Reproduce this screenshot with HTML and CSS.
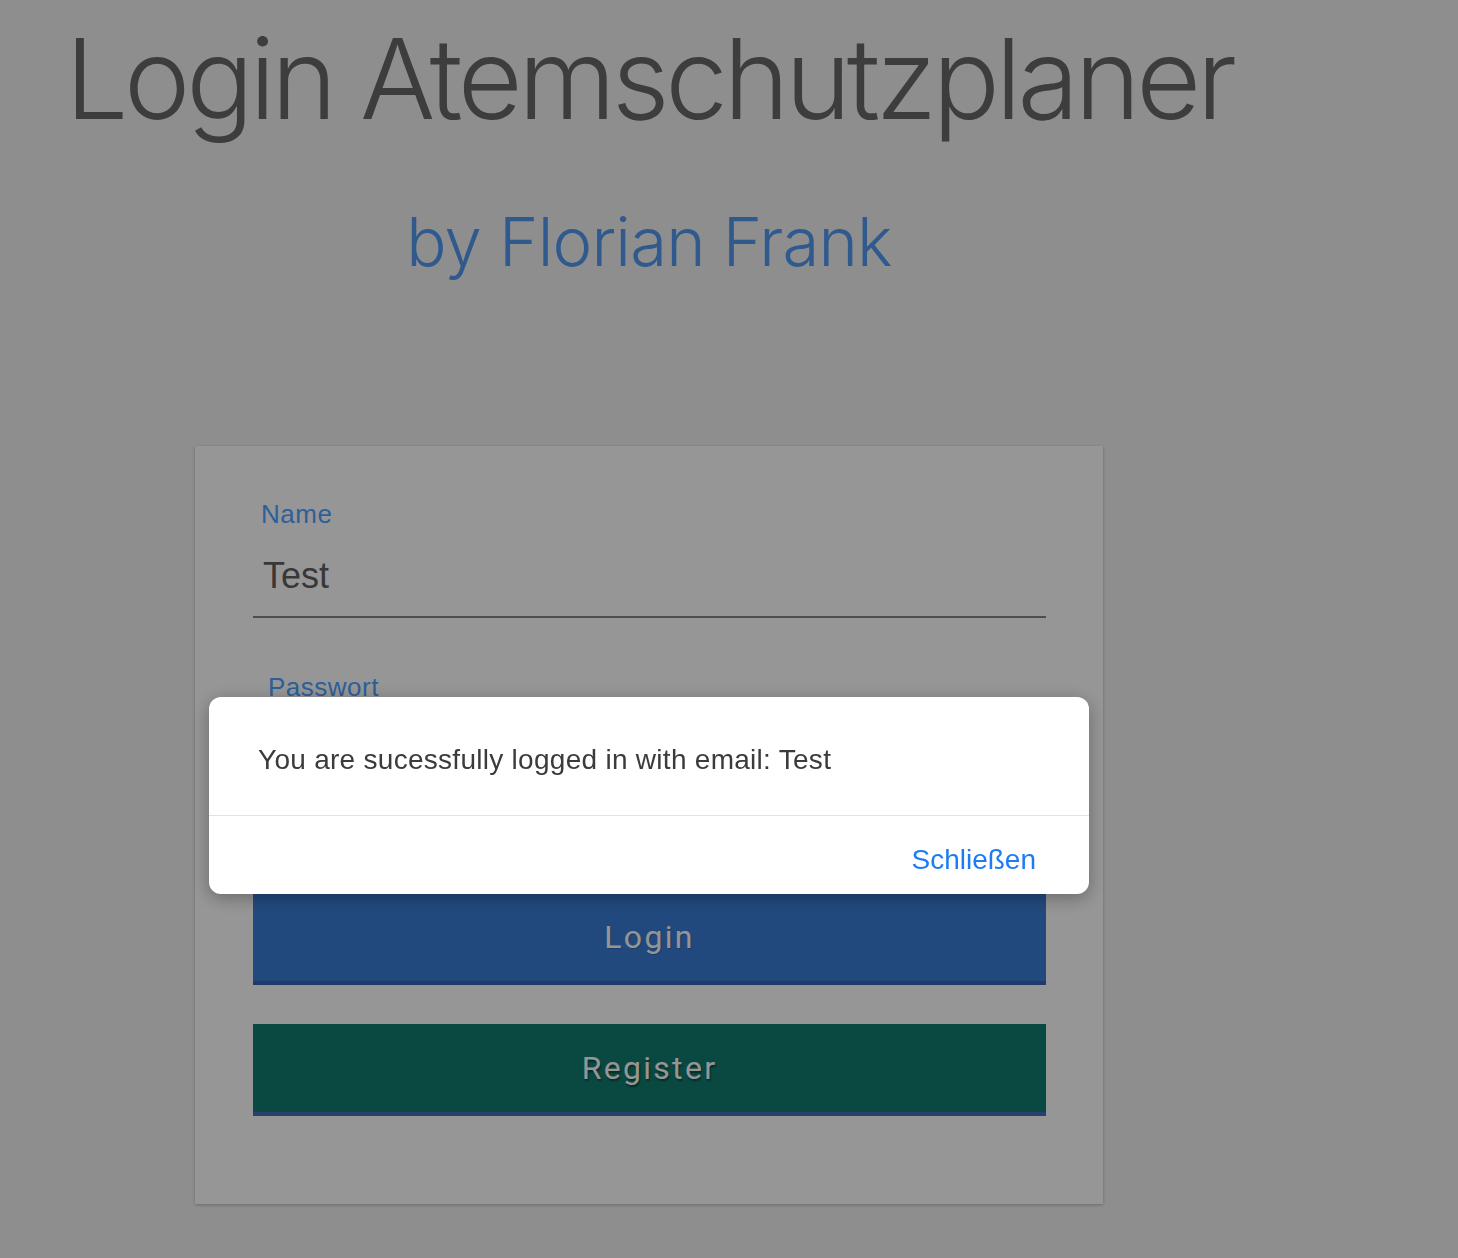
FILE: index.html
```html
<!DOCTYPE html>
<html lang="de">
<head>
<meta charset="utf-8">
<title>Login Atemschutzplaner</title>
<link rel="stylesheet" href="styles.css">
</head>
<body>
<div class="page">
  <h1 class="title">Login Atemschutzplaner</h1>
  <h2 class="subtitle">by Florian Frank</h2>
  <div class="card">
    <div class="field">
      <label class="label">Name</label>
      <div class="input">Test</div>
    </div>
    <div class="field">
      <label class="label label-pw">Passwort</label>
      <div class="input">&nbsp;</div>
    </div>
    <button class="btn btn-login">Login</button>
    <button class="btn btn-register">Register</button>
  </div>
</div>
<div class="backdrop"></div>
<div class="dialog">
  <div class="dialog-body">You are sucessfully logged in with email: Test</div>
  <div class="dialog-actions"><span class="dialog-close">Schließen</span></div>
</div>
</body>
</html>
```
FILE: styles.css
```css
html, body {
  margin: 0;
  padding: 0;
}
body {
  background: #ededed;
  font-family: "Liberation Sans", Arial, sans-serif;
  width: 1458px;
  height: 1258px;
  overflow: hidden;
}
.page {
  width: 1298px;
  display: flex;
  flex-direction: column;
  align-items: center;
}
.title {
  margin: 22px 0 0 0;
  font-family: Inter, "Liberation Sans", sans-serif;
  font-weight: 300;
  font-size: 112px;
  line-height: 112px;
  letter-spacing: -4.3px;
  color: #666666;
  white-space: nowrap;
}
.subtitle {
  margin: 74px 0 0 0;
  font-family: Inter, "Liberation Sans", sans-serif;
  font-weight: 300;
  font-size: 67px;
  line-height: 67px;
  letter-spacing: -0.8px;
  color: #5096ed;
  white-space: nowrap;
}
.card {
  margin-top: 171px;
  width: 908px;
  height: 758px;
  box-sizing: border-box;
  background: #fafafa;
  box-shadow: 0 1px 3px rgba(0,0,0,0.25);
  padding: 53px 57px 0 58px;
  display: flex;
  flex-direction: column;
}
.field {
  display: flex;
  flex-direction: column;
}
.field + .field {
  margin-top: 54px;
}
.label {
  font-size: 26px;
  line-height: 30px;
  letter-spacing: 0.5px;
  color: #4d9eff;
  padding-left: 8px;
}
.label-pw {
  padding-left: 15px;
}
.input {
  margin-top: 27px;
  font-size: 36px;
  line-height: 40px;
  color: #5e5e5e;
  padding: 0 0 20px 10px;
  border-bottom: 2px solid #808080;
}
.btn {
  display: block;
  width: 100%;
  height: 92px;
  border: 0;
  border-bottom: 4px solid;
  margin: 0;
  padding: 0;
  font-family: Roboto, "Liberation Sans", sans-serif;
  font-size: 32px;
  letter-spacing: 2.3px;
  color: #f8f8f8;
}
.btn-login {
  margin-top: 102px;
  background: #397bd2;
  border-bottom-color: #3462b2;
  text-shadow: 1px 1px 1px rgba(0,0,0,0.2);
}
.btn-register {
  margin-top: 39px;
  background: #117b6e;
  border-bottom-color: #416bb9;
  text-shadow: 1px 2px 2px rgba(0,0,0,0.45);
}
.backdrop {
  position: fixed;
  inset: 0;
  background: rgba(0,0,0,0.4);
}
.dialog {
  position: fixed;
  left: 209px;
  top: 697px;
  width: 880px;
  background: #ffffff;
  border-radius: 12px;
  box-shadow: 0 4px 18px rgba(0,0,0,0.3);
  overflow: hidden;
}
.dialog-body {
  height: 119px;
  box-sizing: border-box;
  padding: 46px 40px 0 49px;
  font-size: 28px;
  line-height: 34px;
  letter-spacing: 0.28px;
  color: #3b3b3b;
  border-bottom: 1px solid #e3e3e3;
}
.dialog-actions {
  height: 78px;
  box-sizing: border-box;
  padding: 27px 53px 0 0;
  display: flex;
  justify-content: flex-end;
}
.dialog-close {
  font-size: 28px;
  line-height: 34px;
  color: #1c7cf4;
}
```
